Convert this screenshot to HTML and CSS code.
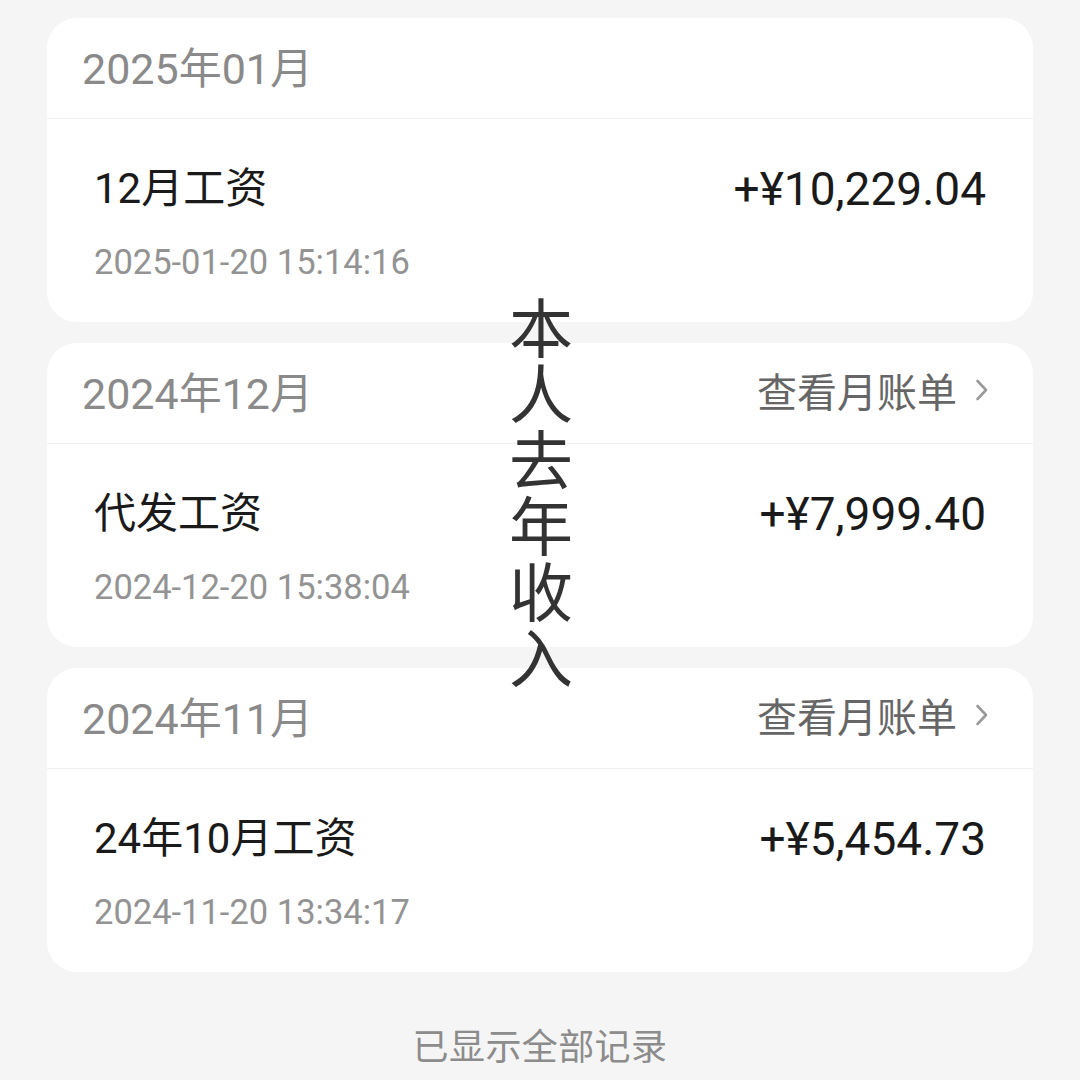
FILE: index.html
```html
<!DOCTYPE html>
<html lang="zh-CN">
<head>
    <meta charset="UTF-8">
    <title>收入记录</title>
    <link rel="stylesheet" href="styles.css">
</head>
<body>
    <div class="page">
        <div class="card">
            <div class="card-head">
                <span class="month">2025年01月</span>
            </div>
            <div class="item">
                <div class="item-info">
                    <div class="item-title">12月工资</div>
                    <div class="item-date">2025-01-20 15:14:16</div>
                </div>
                <div class="item-amount">+¥10,229.04</div>
            </div>
        </div>

        <div class="card">
            <div class="card-head">
                <span class="month">2024年12月</span>
                <span class="bill">查看月账单
                    <svg class="chevron" width="14" height="22" viewBox="0 0 14 22"><polyline points="2.5,2 11,11 2.5,20" fill="none" stroke="#9a9a9a" stroke-width="2.6" stroke-linecap="round" stroke-linejoin="round"/></svg>
                </span>
            </div>
            <div class="item">
                <div class="item-info">
                    <div class="item-title">代发工资</div>
                    <div class="item-date">2024-12-20 15:38:04</div>
                </div>
                <div class="item-amount">+¥7,999.40</div>
            </div>
        </div>

        <div class="card">
            <div class="card-head">
                <span class="month">2024年11月</span>
                <span class="bill">查看月账单
                    <svg class="chevron" width="14" height="22" viewBox="0 0 14 22"><polyline points="2.5,2 11,11 2.5,20" fill="none" stroke="#9a9a9a" stroke-width="2.6" stroke-linecap="round" stroke-linejoin="round"/></svg>
                </span>
            </div>
            <div class="item">
                <div class="item-info">
                    <div class="item-title">24年10月工资</div>
                    <div class="item-date">2024-11-20 13:34:17</div>
                </div>
                <div class="item-amount">+¥5,454.73</div>
            </div>
        </div>

        <div class="footer">已显示全部记录</div>

        <!-- 竖排的水印文字 -->
        <div class="stamp">本人去年收入</div>
    </div>
</body>
</html>
```

FILE: styles.css
```css
html, body{
    margin: 0;
    padding: 0;
    background: #f5f5f5;
}
body{
    font-family: "Roboto", "Noto Sans CJK SC", sans-serif;
}
.page{
    width: 1080px;
    height: 1080px;
    position: relative;
    overflow: hidden;
    padding: 18px 47px 0 47px;
    box-sizing: border-box;
    display: flex;
    flex-direction: column;
    gap: 21px;
}
.card{
    background: #fff;
    border-radius: 30px;
    overflow: hidden;
}
.card-head{
    height: 101px;
    padding: 0 44px 6px 35px;
    box-sizing: border-box;
    display: flex;
    align-items: center;
    justify-content: space-between;
    border-bottom: 1px solid #f1f1f1;
}
.month{
    font-size: 43px;
    color: #8a8a8a;
}
.bill{
    font-size: 40px;
    color: #666;
    display: flex;
    align-items: center;
    gap: 18px;
}
.chevron{
    display: block;
}
.item{
    height: 203px;
    padding: 45px 47px 0 47px;
    box-sizing: border-box;
    display: flex;
    justify-content: space-between;
    align-items: flex-start;
}
.item-title{
    font-size: 42px;
    line-height: 50px;
    color: #1a1a1a;
}
.item-date{
    font-size: 34.5px;
    line-height: 40px;
    color: #939393;
    margin-top: 28px;
}
.item-amount{
    font-size: 46px;
    line-height: 50px;
    color: #1a1a1a;
}
.footer{
    text-align: center;
    font-size: 36px;
    color: #8c8c8c;
    margin-top: 25px;
    letter-spacing: 0.4px;
}
.stamp{
    position: absolute;
    top: 291px;
    left: 508px;
    width: 66px;
    font-family: "Noto Sans CJK SC", sans-serif;
    font-size: 64px;
    line-height: 66px;
    color: #333;
    text-align: center;
    word-break: break-all;
}
```
